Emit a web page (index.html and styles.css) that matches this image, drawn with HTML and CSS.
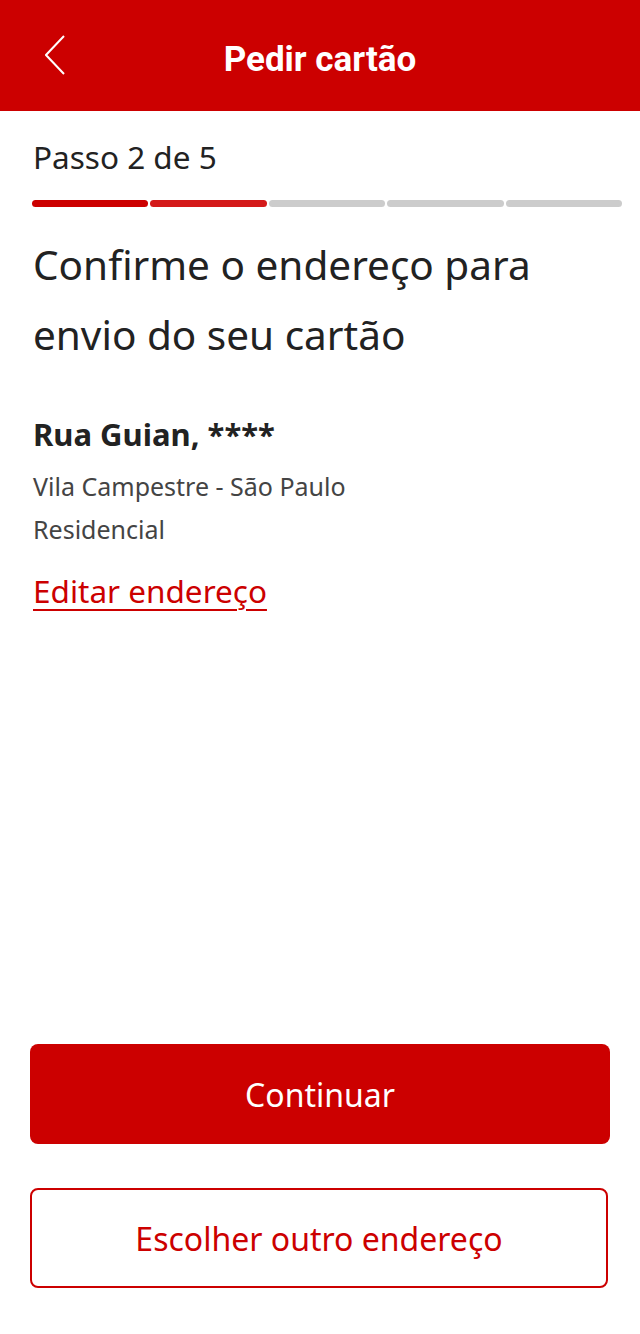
FILE: index.html
```html
<!DOCTYPE html>
<html lang="pt-BR">
<head>
    <meta charset="UTF-8">
    <meta name="viewport" content="width=device-width, initial-scale=1.0">
    <title>Pedir cartão</title>
    <link rel="stylesheet" href="styles.css">
</head>
<body>

<header class="topbar">
    <a class="back" href="#" aria-label="Voltar">
        <svg width="24" height="44" viewBox="0 0 24 44">
            <polyline points="19,1 1,20 19,39" fill="none" stroke="#fff" stroke-width="2"/>
        </svg>
    </a>
    <h1>Pedir cartão</h1>
</header>

<main class="page">
    <div class="steps">
        <p class="step-label">Passo 2 de 5</p>
        <div class="progress">
            <span class="seg done"></span>
            <span class="seg current"></span>
            <span class="seg"></span>
            <span class="seg"></span>
            <span class="seg"></span>
        </div>
    </div>

    <h2 class="title">Confirme o endereço para envio do seu cartão</h2>

    <div class="address">
        <p class="street">Rua Guian, ****</p>
        <p class="line">Vila Campestre - São Paulo</p>
        <p class="line">Residencial</p>
    </div>

    <a class="edit" href="#">Editar endereço</a>

    <div class="actions">
        <button class="btn primary">Continuar</button>
        <button class="btn outline">Escolher outro endereço</button>
    </div>
</main>

</body>
</html>
```

FILE: styles.css
```css
/* tela de confirmação de endereço */
body {
    margin: 0;
    font-family: "Noto Sans", "Open Sans", sans-serif;
    background-color: #fff;
    color: #222;
}
.topbar {
    height: 111px;
    background-color: #cc0000;
    display: flex;
    align-items: center;
    justify-content: center;
    position: relative;
}
.back {
    position: absolute;
    left: 45px;
    top: 35px;
    display: block;
    line-height: 0;
}
.topbar h1 {
    margin: 0;
    color: white;
    font-family: Roboto, "Liberation Sans", sans-serif;
    font-weight: 700;
    font-size: 35px;
    padding-top: 8px;
}
.page {
    padding: 0 18px 0 33px;
    min-height: 1223px;
    display: flex;
    flex-direction: column;
    box-sizing: border-box;
}
.step-label {
    margin: 26px 0 0;
    font-size: 31.5px;
    line-height: 40px;
    color: #222;
}
.progress {
    display: flex;
    gap: 2px;
    margin: 23px 0 0 -1px;
}
.seg {
    flex: 1;
    height: 7px;
    border-radius: 4px;
    background-color: #cccccc;
}
.seg.done {
    background-color: #cc0000;
}
.seg.current {
    background-color: #d41a1a;
}
.title {
    margin: 23px 0 0;
    font-weight: 400;
    font-size: 40.5px;
    line-height: 70px;
    color: #222;
    max-width: 520px;
}
.address {
    margin-top: 44px;
}
.street {
    margin: 0;
    font-weight: 700;
    font-size: 31px;
    line-height: 40px;
    color: #222;
}
.line {
    margin: 15px 0 0;
    font-size: 25px;
    line-height: 34px;
    color: #444;
}
.line + .line {
    margin-top: 9px;
}
.edit {
    margin-top: 25px;
    align-self: flex-start;
    font-size: 31.5px;
    line-height: 40px;
    color: #cc0000;
    text-decoration: underline;
    text-underline-offset: 6px;
    text-decoration-thickness: 2px;
}
.actions {
    margin-top: auto;
    margin-left: -3px;
    margin-bottom: 46px;
    display: flex;
    flex-direction: column;
    gap: 44px;
}
.btn {
    width: 580px;
    height: 100px;
    border-radius: 8px;
    font-family: "Noto Sans", "Open Sans", sans-serif;
    font-size: 32px;
    cursor: pointer;
}
.btn.primary {
    background-color: #cc0000;
    border: none;
    color: white;
}
.btn.outline {
    width: 578px;
    background-color: white;
    border: 2px solid #cc0000;
    color: #cc0000;
}
```
